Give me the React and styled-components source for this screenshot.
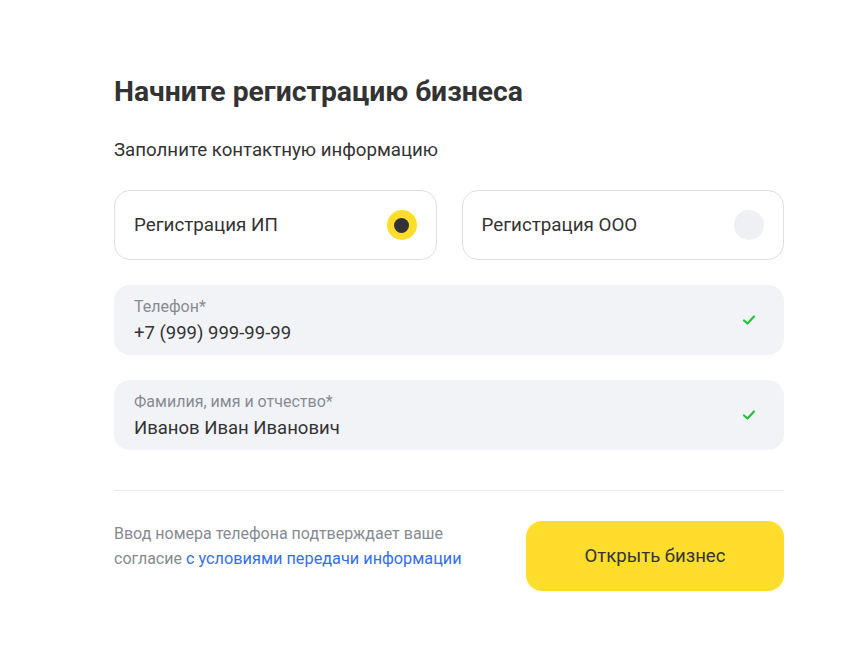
import styled, { createGlobalStyle } from 'styled-components';

const GlobalStyle = createGlobalStyle`
  body {
    margin: 0;
    background: #ffffff;
    font-family: Roboto, "Liberation Sans", Arial, sans-serif;
    color: #333333;
  }
  * { box-sizing: border-box; }
`;

const Page = styled.div`
  padding: 74px 79px 0 114px;
`;

const Form = styled.form`
  width: 670px;
  display: flex;
  flex-direction: column;
`;

const Title = styled.h1`
  margin: 0;
  font-size: 28.3px;
  line-height: 36px;
  font-weight: 700;
  color: #333333;
`;

const Subtitle = styled.p`
  margin: 28px 0 0;
  font-size: 18.7px;
  line-height: 24px;
  color: #333333;
`;

const Options = styled.div`
  margin-top: 28px;
  display: grid;
  grid-template-columns: 1fr 1fr;
  gap: 25px;
`;

const Option = styled.label`
  height: 70px;
  border: 1px solid #dddfe3;
  border-radius: 16px;
  padding: 0 19px 0 19px;
  display: flex;
  align-items: center;
  justify-content: space-between;
  font-size: 18.8px;
  color: #333333;
  cursor: pointer;
`;

const Radio = styled.span`
  width: 30px;
  height: 30px;
  border-radius: 50%;
  background: ${(p) => (p.$checked ? '#ffdd2d' : '#eef0f4')};
  display: flex;
  align-items: center;
  justify-content: center;

  &::after {
    content: '';
    display: ${(p) => (p.$checked ? 'block' : 'none')};
    width: 15px;
    height: 15px;
    border-radius: 50%;
    background: #333333;
  }
`;

const Field = styled.div`
  margin-top: ${(p) => p.$gap}px;
  height: 70px;
  border-radius: 16px;
  background: #f2f3f7;
  padding: 12px 28px 0 20px;
  display: flex;
  justify-content: space-between;
  align-items: center;
`;

const FieldBody = styled.div`
  display: flex;
  flex-direction: column;
  align-self: flex-start;
`;

const FieldLabel = styled.span`
  font-size: 16px;
  line-height: 19px;
  color: #878b91;
`;

const FieldValue = styled.span`
  margin-top: 4px;
  font-size: 18.5px;
  line-height: 26px;
  color: #333333;
`;

const Check = styled.svg`
  width: 14px;
  height: 14px;
  margin-top: -12px;
`;

const Divider = styled.hr`
  margin: 40px 0 0;
  border: 0;
  border-top: 1px solid #eceef1;
`;

const Footer = styled.div`
  margin-top: 30px;
  display: flex;
  justify-content: space-between;
  align-items: flex-start;
`;

const Note = styled.p`
  margin: 0;
  font-size: 16px;
  line-height: 25px;
  color: #878b91;
  width: 370px;
`;

const Link = styled.a`
  color: #336fee;
  font-size: 16.3px;
  text-decoration: none;
`;

const Submit = styled.button`
  width: 258px;
  height: 70px;
  border: 0;
  border-radius: 16px;
  background: #ffdd2d;
  font-family: inherit;
  font-size: 18.6px;
  color: #333333;
  cursor: pointer;
`;

const CheckIcon = () => (
  <Check viewBox="0 0 14 14">
    <path d="M2 7.5 L5.5 10.5 L12 3.5" fill="none" stroke="#22c33a" strokeWidth="2.2" strokeLinecap="round" strokeLinejoin="round" />
  </Check>
);

const App = () => {
  return (
    <Page>
      <GlobalStyle />
      <Form onSubmit={(e) => e.preventDefault()}>
        <Title>Начните регистрацию бизнеса</Title>
        <Subtitle>Заполните контактную информацию</Subtitle>
        <Options>
          <Option>
            Регистрация ИП
            <Radio $checked />
          </Option>
          <Option>
            Регистрация ООО
            <Radio />
          </Option>
        </Options>
        <Field $gap={25}>
          <FieldBody>
            <FieldLabel>Телефон*</FieldLabel>
            <FieldValue>+7 (999) 999-99-99</FieldValue>
          </FieldBody>
          <CheckIcon />
        </Field>
        <Field $gap={25}>
          <FieldBody>
            <FieldLabel>Фамилия, имя и отчество*</FieldLabel>
            <FieldValue>Иванов Иван Иванович</FieldValue>
          </FieldBody>
          <CheckIcon />
        </Field>
        <Divider />
        <Footer>
          <Note>
            Ввод номера телефона подтверждает ваше согласие{' '}
            <Link href="#">с условиями передачи информации</Link>
          </Note>
          <Submit type="submit">Открыть бизнес</Submit>
        </Footer>
      </Form>
    </Page>
  );
};

export default App;
